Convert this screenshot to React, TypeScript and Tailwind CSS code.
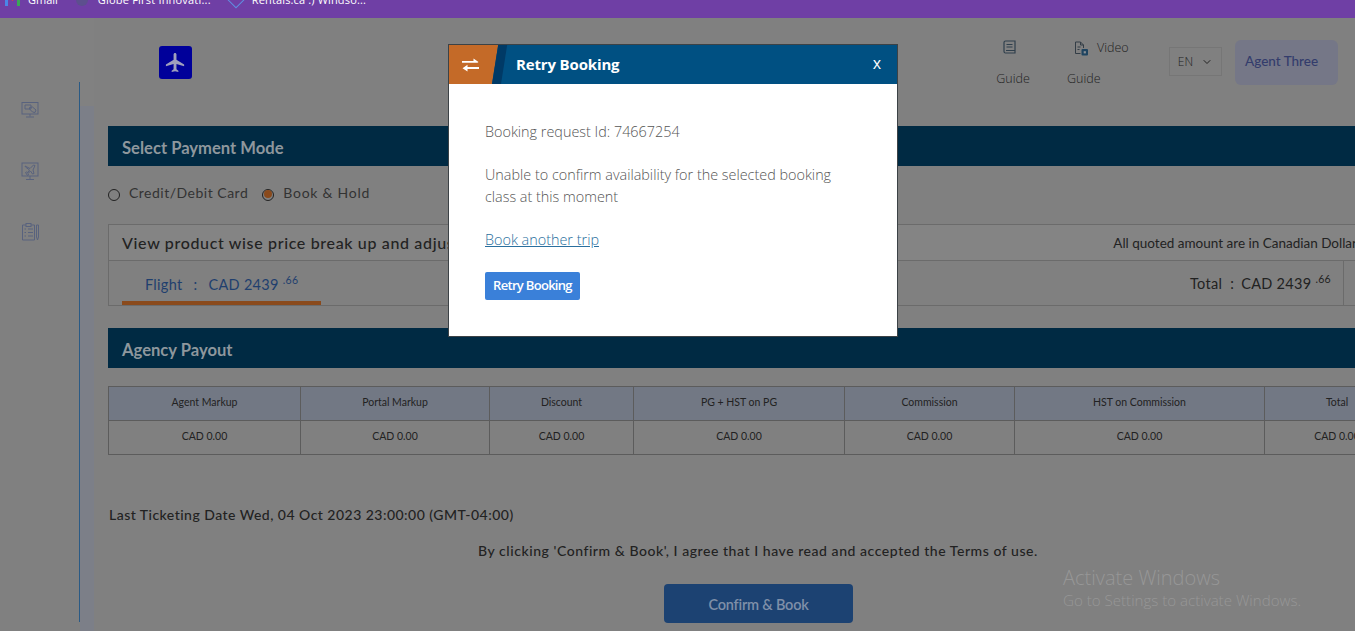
import { ChevronDown } from "lucide-react";
import { MdFlight } from "react-icons/md";

const payoutColumns = [
  { label: "Agent Markup", width: "w-[192px]" },
  { label: "Portal Markup", width: "w-[189px]" },
  { label: "Discount", width: "w-[144px]" },
  { label: "PG + HST on PG", width: "w-[211px]" },
  { label: "Commission", width: "w-[170px]" },
  { label: "HST on Commission", width: "w-[250px]" },
  { label: "Total", width: "w-[145px]" },
];

function GmailIcon() {
  return (
    <svg width="15" height="12" viewBox="0 0 15 12">
      <path d="M0 0h3v12H0z" fill="#4a86e8" />
      <path d="M12 0h3v12h-3z" fill="#3aa757" />
      <path d="M0 0h3l4.500 4L12 0h3L7.500 7z" fill="#e0433a" />
    </svg>
  );
}

function MonitorIcon() {
  return (
    <svg width="18" height="18" viewBox="0 0 18 18" fill="none" stroke="#58627e" strokeWidth="1">
      <rect x="1" y="1.500" width="16" height="11.500" />
      <path d="M9 13v2.500M5 16h8" />
      <path d="M4 4h6v4H4z" />
      <path d="M8.500 6.500l3-.5 3.500 3-1 2.500-2.500-.5-3-3z" />
    </svg>
  );
}

function PlaneScreenIcon() {
  return (
    <svg width="18" height="19" viewBox="0 0 18 19" fill="none" stroke="#58627e" strokeWidth="1">
      <rect x="1" y="1" width="16" height="13" />
      <path d="M9 14v3M5 17.500h8" />
      <path d="M4 4l5 2.500L12.500 3l1.500.5-2 4.500 1 3.500-1.500.5L9.500 9 7 11.500l.5 1.500-1 .5-2-3 1-.5 1.500.5L8.500 8 4.500 5z" />
    </svg>
  );
}

function ChecklistIcon() {
  return (
    <svg width="19" height="18" viewBox="0 0 19 18" fill="none" stroke="#58627e" strokeWidth="1">
      <path d="M5 2H1.500v15h12V2H10" />
      <rect x="5" y="0.500" width="5" height="3" />
      <path d="M3.500 6h1.500M7 6h5M3.500 9.500h1.500M7 9.500h5M3.500 13h1.500M7 13h5" />
      <path d="M15.500 2h2v12l-1 3-1-3z" />
    </svg>
  );
}

function GuideBookIcon() {
  return (
    <svg width="13" height="14" viewBox="0 0 13 14" fill="none" stroke="#2f3f4c" strokeWidth="1.200">
      <path d="M1 2.500a1.500 1.500 0 0 1 1.500-1.500H12v12H2.500A1.500 1.500 0 0 1 1 11.500z" />
      <path d="M3.500 4.500h6M3.500 7h6M3 10.500h9" />
    </svg>
  );
}

function VideoDocIcon() {
  return (
    <svg width="14" height="15" viewBox="0 0 14 15" fill="none" stroke="#333d46" strokeWidth="1">
      <path d="M6.500 12.500h-5V1h5l3 3v3" />
      <path d="M6.500 1v3h3M3.500 6h3M3.500 8.500h2" />
      <rect x="7.500" y="8" width="6.500" height="6.500" rx="1" fill="#1f4460" stroke="none" />
      <rect x="9.700" y="10.200" width="2.200" height="2.200" fill="#8a8f94" stroke="none" />
    </svg>
  );
}

function SwapIcon() {
  return (
    <svg width="17" height="14" viewBox="0 0 17 14" fill="#ffffff">
      <path d="M0 3h11.500V0.500L16.500 4l-1 .8H0z" />
      <path d="M17 9H5.500V6.800L0.500 10.200 5.500 13.500V11H17z" />
    </svg>
  );
}

function SectionBar({ title }: { title: string }) {
  return (
    <div className="flex h-10 items-center bg-[#002a43] pl-3.5 pt-[4px] text-[16.600px] font-bold text-[#8e979d]">
      {title}
    </div>
  );
}

function RetryModal() {
  return (
    <div className="absolute left-[448px] top-[44px] h-[293px] w-[450px] border border-[#3c4246] bg-white font-['Open_Sans',sans-serif]">
      <div className="relative flex h-[39px] items-center overflow-hidden bg-[#005082]">
        <div className="absolute -left-2 top-0 h-full w-[51px] origin-bottom-left -skew-x-[9deg] bg-[#c46a28]" />
        <div className="absolute left-[43px] top-0 h-full w-[9px] origin-bottom-left -skew-x-[9deg] bg-[#003a66]" />
        <div className="relative ml-[13px]"><SwapIcon /></div>
        <span className="relative ml-[37px] text-[15px] font-bold tracking-[-0.15px] text-white">Retry Booking</span>
        <span className="absolute right-[16px] top-[6px] text-[16px] text-white">x</span>
      </div>
      <div className="px-9 pt-[37px] text-[14.400px] font-light leading-[22px] text-[#555]">
        <p>Booking request Id: 74667254</p>
        <p className="mt-[21px] w-[370px]">Unable to confirm availability for the selected booking class at this moment</p>
        <a className="mt-[21px] block w-fit text-[#2a6f9e] underline">Book another trip</a>
        <button className="mt-[21px] block h-7 w-[95px] rounded-[2px] bg-[#3a80d9] pb-[2px] text-[13px] font-semibold tracking-[-0.7px] text-white">
          Retry Booking
        </button>
      </div>
    </div>
  );
}

export default function App() {
  return (
    <div className="relative h-[631px] w-[1355px] overflow-hidden bg-[#808080] font-['Lato',sans-serif] text-[#2a2a2a]">
      {/* browser bookmarks bar */}
      <div className="relative h-[18px] overflow-hidden bg-[#6f3fa5] font-['Open_Sans',sans-serif] text-[11px] text-white">
        <div className="absolute -top-[8px] left-[5px] flex items-center">
          <GmailIcon />
          <span className="ml-[8px]">Gmail</span>
          <span className="ml-[18px] h-3 w-3 rounded-full bg-[#5d4f8e]" />
          <span className="ml-[10px] tracking-[0.2px]">Globe First Innovati...</span>
          <span className="ml-[19px] h-3 w-3 rotate-45 border border-[#5f8fe0]" />
          <span className="ml-[10px] tracking-[0.15px]">Rentals.ca :) Windso...</span>
        </div>
      </div>

      <div className="flex h-[613px]">
        <aside className="flex w-20 shrink-0 flex-col">
          <div className="h-16 shrink-0" />
          <div className="mb-[9px] flex flex-1 flex-col items-start border-r border-[#2a5a85] pl-[21px] pt-[19px]">
            <MonitorIcon />
            <div className="mt-[43px]"><PlaneScreenIcon /></div>
            <div className="mt-[42px]"><ChecklistIcon /></div>
          </div>
        </aside>

        <div className="flex w-[14px] shrink-0 flex-col">
          <div className="h-[88px] bg-[#818181]" />
          <div className="flex-1 bg-[#7c7f88]" />
        </div>

        <main className="min-w-0 flex-1">
          <header className="relative flex h-[108px] items-start">
            <div className="ml-[65px] mt-[28px] flex h-[33px] w-[33px] items-center justify-center rounded-[3px] bg-[#00009a]">
              <MdFlight className="h-[23px] w-[23px] text-[#9f9fbd]" />
            </div>
            <div className="ml-auto mr-[17px] mt-[22px] flex items-start font-['Open_Sans',sans-serif] text-[12.500px] font-light text-[#222]">
              <div className="flex w-[34px] flex-col items-center">
                <div className="mr-2"><GuideBookIcon /></div>
                <span className="mt-[16px]">Guide</span>
              </div>
              <div className="ml-[37px] flex w-[61px] flex-col items-start">
                <div className="ml-[7px] flex h-[17px] items-center">
                  <VideoDocIcon />
                  <span className="ml-[9px]">Video</span>
                </div>
                <span className="mt-[13px]">Guide</span>
              </div>
              <div className="ml-[41px] mt-[7px] flex h-[29px] w-[53px] items-center justify-center gap-2 border border-[#767676] text-[12px]">
                EN <ChevronDown className="h-3 w-3" />
              </div>
              <div className="ml-[13px] flex h-[45px] w-[103px] items-center rounded-md bg-[#757787] pb-[2px] pl-[10px] font-['Lato',sans-serif] text-[13.500px] font-medium text-[#333c6c]">
                Agent Three
              </div>
            </div>
          </header>

          <div className="w-[1290px] pl-[14px]">
            <SectionBar title="Select Payment Mode" />

            <div className="flex h-[58px] items-center pb-[6px] text-[14px] tracking-[0.5px] text-[#333]">
              <span className="mt-[6px] h-3 w-3 rounded-full border border-[#222]" />
              <span className="ml-[9px]">Credit/Debit Card</span>
              <span className="relative ml-[14px] mt-[6px] h-3 w-3 rounded-full border border-[#222]">
                <span className="absolute left-[1px] top-0 h-2 w-2 rounded-full bg-[#8a4a1c]" />
              </span>
              <span className="ml-[9px] tracking-[0.75px]">Book &amp; Hold</span>
            </div>

            <div className="border border-[#6b6b6b]">
              <div className="flex h-[36px] items-center border-b border-[#6b6b6b] bg-[#848484] pl-[13px]">
                <span className="text-[16px] font-medium tracking-[0.65px] text-[#222]">
                  View product wise price break up and adjust markup
                </span>
                <span className="ml-auto mr-[26px] pt-[2px] text-[13.500px] text-[#222]">
                  All quoted amount are in Canadian Dollar
                </span>
              </div>
              <div className="flex h-[44px] text-[14.500px] tracking-[0.3px]">
                <div className="ml-[13px] flex h-full w-[199px] items-center border-b-4 border-[#8a4a1c] pl-[23px] pt-[8px] text-[#1f3f6e]">
                  <span>Flight</span>
                  <span className="ml-[11px]">:</span>
                  <span className="ml-[11px]">CAD 2439</span>
                  <sup className="ml-1 text-[10.500px]">.66</sup>
                </div>
                <div className="ml-auto flex h-full w-[154px] items-center border-r border-[#6b6b6b] pt-[2px] text-[#222]">
                  <span>Total</span>
                  <span className="ml-[8px]">:</span>
                  <span className="ml-[7px]">CAD 2439</span>
                  <sup className="ml-1 text-[10.500px]">.66</sup>
                </div>
                <div className="w-[39px]" />
              </div>
            </div>

            <div className="mt-[22px]">
              <SectionBar title="Agency Payout" />
            </div>

            <table className="mt-[18px] w-[1301px] table-fixed border-collapse text-center text-[10.500px] text-[#222]">
              <thead>
                <tr className="h-[34px] bg-[#727884]">
                  {payoutColumns.map((col) => (
                    <th key={col.label} className={`${col.width} border border-[#5c5c5c] pb-[2px] font-normal`}>
                      {col.label}
                    </th>
                  ))}
                </tr>
              </thead>
              <tbody>
                <tr className="h-[34px]">
                  {payoutColumns.map((col) => (
                    <td key={col.label} className="border border-[#5c5c5c] pb-[2px]">CAD 0.00</td>
                  ))}
                </tr>
              </tbody>
            </table>

            <p className="ml-[1px] mt-[49px] text-[14px] font-medium tracking-[0.47px] text-[#222]">
              Last Ticketing Date Wed, 04 Oct 2023 23:00:00 (GMT-04:00)
            </p>
            <p className="mt-[15px] w-[1272px] pl-[28px] text-center text-[14px] font-medium tracking-[0.55px] text-[#222]">
              By clicking 'Confirm &amp; Book', I agree that I have read and accepted the Terms of use.
            </p>
            <button className="ml-[556px] mt-[23px] block h-[39px] w-[189px] rounded-[4px] bg-[#1c4272] pt-[3px] text-[14.500px] font-semibold tracking-[-0.2px] text-[#7f8fa8]">
              Confirm &amp; Book
            </button>
          </div>
        </main>
      </div>

      <div className="absolute left-[1063px] top-[566px] font-['Open_Sans',sans-serif] font-light text-[#979797]">
        <div className="text-[20px] leading-6">Activate Windows</div>
        <div className="text-[15.100px] leading-5">Go to Settings to activate Windows.</div>
      </div>

      <RetryModal />
    </div>
  );
}
